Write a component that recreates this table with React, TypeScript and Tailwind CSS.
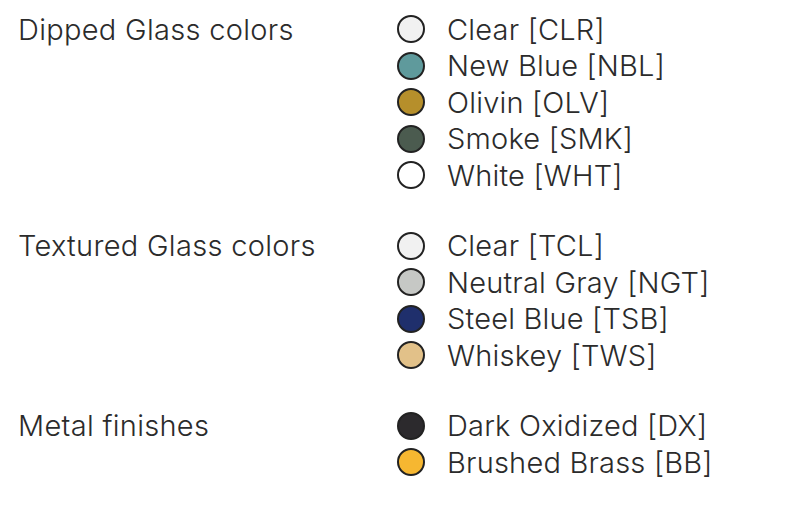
const sections: { title: string; items: { name: string; color: string }[] }[] = [
  {
    title: "Dipped Glass colors",
    items: [
      { name: "Clear [CLR]", color: "bg-[#f1f1f1]" },
      { name: "New Blue [NBL]", color: "bg-[#5f9a9c]" },
      { name: "Olivin [OLV]", color: "bg-[#b68f2b]" },
      { name: "Smoke [SMK]", color: "bg-[#4b5b4f]" },
      { name: "White [WHT]", color: "bg-white" },
    ],
  },
  {
    title: "Textured Glass colors",
    items: [
      { name: "Clear [TCL]", color: "bg-[#f1f1f1]" },
      { name: "Neutral Gray [NGT]", color: "bg-[#c6c8c5]" },
      { name: "Steel Blue [TSB]", color: "bg-[#1f2f6c]" },
      { name: "Whiskey [TWS]", color: "bg-[#e2c189]" },
    ],
  },
  {
    title: "Metal finishes",
    items: [
      { name: "Dark Oxidized [DX]", color: "bg-[#2c2a2d]" },
      { name: "Brushed Brass [BB]", color: "bg-[#f6b731]" },
    ],
  },
];

export default function App() {
  return (
    <div className="w-[806px] h-[519px] bg-white pt-[11px] font-['Inter',sans-serif] font-light text-[#2b2b2b] flex flex-col gap-[34px]">
      {sections.map((s) => (
        <div key={s.title} className="flex">
          <div className="w-[397px] pl-[18px] h-[36.5px] flex items-center text-[29px] tracking-[0.3px]">
            {s.title}
          </div>
          <div className="flex flex-col">
            {s.items.map((it) => (
              <div key={it.name} className="h-[36.5px] flex items-center">
                <span className={`w-[28px] h-[28px] rounded-full border-2 border-[#222] ${it.color}`} />
                <span className="ml-[22px] text-[29px] tracking-[0.2px]">{it.name}</span>
              </div>
            ))}
          </div>
        </div>
      ))}
    </div>
  );
}
